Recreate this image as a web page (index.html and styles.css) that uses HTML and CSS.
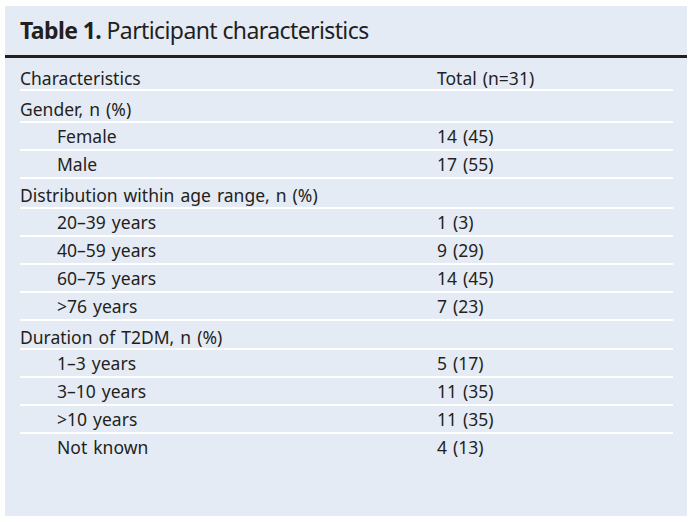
FILE: index.html
```html
<!DOCTYPE html>
<html lang="en">
<head>
<meta charset="utf-8">
<title>Table 1. Participant characteristics</title>
<link rel="stylesheet" href="styles.css">
</head>
<body>
<div class="panel">
  <h1 class="title"><b>Table 1.</b> Participant characteristics</h1>
  <div class="rule"></div>
  <div class="table">
    <div class="row head"><span class="c1">Characteristics</span><span class="c2">Total (n=31)</span></div>
    <div class="row cat first"><span class="c1">Gender, n (%)</span><span class="c2"></span></div>
    <div class="row sub"><span class="c1">Female</span><span class="c2">14 (45)</span></div>
    <div class="row sub"><span class="c1">Male</span><span class="c2">17 (55)</span></div>
    <div class="row cat"><span class="c1">Distribution within age range, n (%)</span><span class="c2"></span></div>
    <div class="row sub"><span class="c1">20–39 years</span><span class="c2">1 (3)</span></div>
    <div class="row sub"><span class="c1">40–59 years</span><span class="c2">9 (29)</span></div>
    <div class="row sub"><span class="c1">60–75 years</span><span class="c2">14 (45)</span></div>
    <div class="row sub"><span class="c1">&gt;76 years</span><span class="c2">7 (23)</span></div>
    <div class="row cat"><span class="c1">Duration of T2DM, n (%)</span><span class="c2"></span></div>
    <div class="row sub"><span class="c1">1–3 years</span><span class="c2">5 (17)</span></div>
    <div class="row sub"><span class="c1">3–10 years</span><span class="c2">11 (35)</span></div>
    <div class="row sub"><span class="c1">&gt;10 years</span><span class="c2">11 (35)</span></div>
    <div class="row sub last"><span class="c1">Not known</span><span class="c2">4 (13)</span></div>
  </div>
</div>
</body>
</html>
```

FILE: styles.css
```css
html, body {
  margin: 0;
  padding: 0;
  background: #ffffff;
}
body {
  padding: 6px 6px 6px 5px;
  font-family: "Noto Sans", "Open Sans", sans-serif;
  color: #231f20;
}
.panel {
  width: 682px;
  height: 510px;
  background: #e5ebf5;
  box-sizing: border-box;
}
.title {
  margin: 0;
  height: 49px;
  box-sizing: border-box;
  padding: 9px 0 0 15px;
  font-size: 23px;
  font-weight: 400;
  line-height: 30px;
  letter-spacing: -0.6px;
}
.title b {
  font-weight: 700;
}
.rule {
  height: 3px;
  background: #231f20;
}
.table {
  padding: 0 14px 0 15px;
}
.row {
  display: grid;
  grid-template-columns: 417px 1fr;
  border-bottom: 2px solid #ffffff;
  font-size: 17.5px;
  line-height: 26px;
  word-spacing: 1.5px;
  box-sizing: border-box;
}
.row.head {
  height: 33px;
  padding-top: 7px;
}
.row.cat {
  height: 29.5px;
  padding-top: 3px;
}
.row.cat.first {
  height: 32px;
  padding-top: 5px;
}
.row.sub {
  height: 28px;
}
.row.sub .c1 {
  padding-left: 37px;
}
.row.last {
  border-bottom: 0;
}
```
